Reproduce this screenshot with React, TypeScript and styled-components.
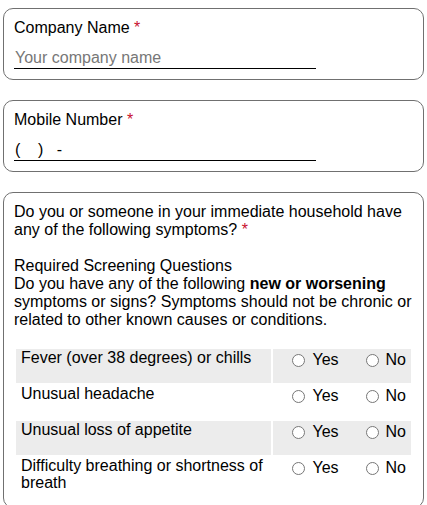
import {FC} from 'react';
import styled, {createGlobalStyle} from 'styled-components'

const GlobalStyle = createGlobalStyle`
  body {
    margin: 0;
    background: #fff;
    font-family: "Liberation Sans", Arial, sans-serif;
    font-size: 16px;
    color: #000;
  }
`;

const Page = styled.form`
  display: flex;
  flex-direction: column;
  gap: 20px;
  padding: 8px 3px 0 3px;
`;

const Card = styled.fieldset`
  margin: 0;
  min-width: 0;
  border: 1px solid #707070;
  border-radius: 10px;
  padding: 10px;
  line-height: 18px;
`;

const Label = styled.label`
  display: block;
  margin-bottom: 10px;
`;

const Required = styled.span`
  color: #c8102e;
`;

const TextInput = styled.input`
  box-sizing: border-box;
  display: block;
  width: 302px;
  height: 22px;
  margin: 0;
  padding: 1px 1px 0 1px;
  border: none;
  border-bottom: 1px solid #000;
  font-family: inherit;
  font-size: 16px;
  color: #000;
  background: transparent;
  outline: none;

  &::placeholder {
    color: #777;
  }
`;

const Question = styled.p`
  margin: 0 0 18px 0;
`;

const Intro = styled.p`
  margin: 0 0 18px 0;
`;

const Table = styled.table`
  width: 100%;
  border-collapse: separate;
  border-spacing: 2px;
  margin: 0;
`;

const Row = styled.tr<{$shaded: boolean}>`
  height: 34px;

  td {
    background: ${p => (p.$shaded ? '#ececec' : '#fff')};
  }
`;

const SymptomCell = styled.td`
  vertical-align: top;
  padding: 0 5px 4px 5px;
  line-height: 17px;
`;

const ChoiceCell = styled.td`
  width: 133px;
  vertical-align: top;
  padding: 2px 5px 0 0;
`;

const Choices = styled.div`
  display: flex;
  justify-content: flex-end;
  gap: 27px;
`;

const Choice = styled.label`
  display: flex;
  align-items: center;
  gap: 7px;
  line-height: 18px;

  input {
    margin: 0;
    width: 13px;
    height: 13px;
  }
`;

const symptoms = [
  'Fever (over 38 degrees) or chills',
  'Unusual headache',
  'Unusual loss of appetite',
  'Difficulty breathing or shortness of breath',
];

const SymptomRow: FC<{text: string, index: number}> = ({text, index}) => (
  <Row $shaded={index % 2 === 0}>
    <SymptomCell>{text}</SymptomCell>
    <ChoiceCell>
      <Choices>
        <Choice>
          <input type="radio" name={'symptom-' + index} value="yes"/>
          Yes
        </Choice>
        <Choice>
          <input type="radio" name={'symptom-' + index} value="no"/>
          No
        </Choice>
      </Choices>
    </ChoiceCell>
  </Row>
);

export default function App() {
  return (
    <>
      <GlobalStyle/>
      <Page onSubmit={e => e.preventDefault()}>
        <Card>
          <Label htmlFor="company">Company Name <Required>*</Required></Label>
          <TextInput id="company" type="text" placeholder="Your company name"/>
        </Card>
        <Card>
          <Label htmlFor="mobile">Mobile Number <Required>*</Required></Label>
          <TextInput id="mobile" type="tel" defaultValue="(    )   -"/>
        </Card>
        <Card>
          <Question>
            Do you or someone in your immediate household have any of the following symptoms? <Required>*</Required>
          </Question>
          <Intro>
            Required Screening Questions<br/>
            Do you have any of the following <b>new or worsening</b> symptoms or signs? Symptoms should not be
            chronic or related to other known causes or conditions.
          </Intro>
          <Table>
            <tbody>
              {symptoms.map((s, i) => (
                <SymptomRow key={s} text={s} index={i}/>
              ))}
            </tbody>
          </Table>
        </Card>
      </Page>
    </>
  );
}
